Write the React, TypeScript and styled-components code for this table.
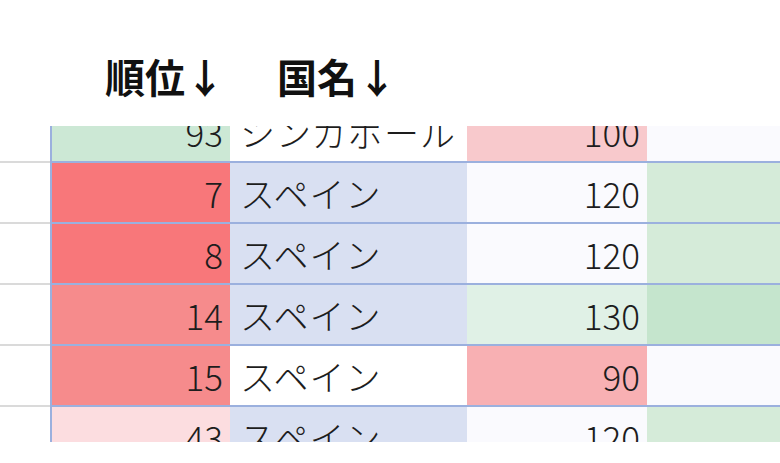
import React from 'react';
import styled, { createGlobalStyle } from 'styled-components';

const GlobalStyle = createGlobalStyle`
  html, body {
    margin: 0;
    padding: 0;
    background: #ffffff;
  }
  body {
    font-family: "Noto Sans CJK JP", "Noto Sans", sans-serif;
    color: #1d1d1d;
  }
`;

interface Row {
  rank: string;
  name: string;
  value: string;
  rankBg: string;
  nameBg: string;
  valueBg: string;
  extraBg: string;
}

// 表示する行（上端の1行は半分だけ見える）
const rows: Row[] = [
  { rank: '93', name: 'シンガポール', value: '100', rankBg: '#cce8d5', nameBg: '#ffffff', valueBg: '#f8c9cc', extraBg: '#fafafe' },
  { rank: '7', name: 'スペイン', value: '120', rankBg: '#f8777a', nameBg: '#d9e0f2', valueBg: '#fafafe', extraBg: '#d5ebd9' },
  { rank: '8', name: 'スペイン', value: '120', rankBg: '#f8777a', nameBg: '#d9e0f2', valueBg: '#fafafe', extraBg: '#d5ebd9' },
  { rank: '14', name: 'スペイン', value: '130', rankBg: '#f68b8c', nameBg: '#d9e0f2', valueBg: '#e0f1e6', extraBg: '#c5e5cd' },
  { rank: '15', name: 'スペイン', value: '90', rankBg: '#f68b8c', nameBg: '#ffffff', valueBg: '#f8b0b3', extraBg: '#fafafe' },
  { rank: '43', name: 'スペイン', value: '120', rankBg: '#fcdde0', nameBg: '#d9e0f2', valueBg: '#fafafe', extraBg: '#d5ebd9' },
];

const App: React.FC = () => {
  return (
    <>
      <GlobalStyle />
      <Page>
        <Header>
          <HeaderLabel>順位↓</HeaderLabel>
          <HeaderLabel>国名↓</HeaderLabel>
        </Header>
        <SheetViewport>
          <Sheet>
            {rows.map((row, i) => (
              <SheetRow key={i}>
                <StubCell />
                <Cell $bg={row.rankBg} $align="right" $first>
                  {row.rank}
                </Cell>
                <Cell $bg={row.nameBg} $align="left">
                  {row.name}
                </Cell>
                <Cell $bg={row.valueBg} $align="right">
                  {row.value}
                </Cell>
                <Cell $bg={row.extraBg} $align="right" />
              </SheetRow>
            ))}
          </Sheet>
        </SheetViewport>
      </Page>
    </>
  );
};

const Page = styled.div`
  width: 780px;
  height: 463px;
  overflow: hidden;
  background: #ffffff;
`;

const Header = styled.div`
  height: 126px;
  box-sizing: border-box;
  padding: 53px 0 0 105px;
  display: flex;
  gap: 52px;
`;

const HeaderLabel = styled.span`
  font-family: "Noto Sans CJK JP", "Noto Sans", sans-serif;
  font-weight: 700;
  font-size: 40px;
  line-height: 46px;
  color: #111111;
`;

const SheetViewport = styled.div`
  height: 316px;
  overflow: hidden;
`;

const Sheet = styled.div`
  margin-top: -24px;
  display: flex;
  flex-direction: column;
`;

const SheetRow = styled.div`
  display: grid;
  grid-template-columns: 50px 180px 237px 180px 1fr;
  height: 61px;
`;

const StubCell = styled.div`
  background: #ffffff;
  border-bottom: 2px solid #dadada;
`;

const Cell = styled.div<{ $bg: string; $align: 'left' | 'right'; $first?: boolean }>`
  box-sizing: border-box;
  background: ${p => p.$bg};
  border-bottom: 2px solid #9bb0de;
  border-left: ${p => (p.$first ? '2px solid #9bb0de' : 'none')};
  display: flex;
  align-items: center;
  justify-content: ${p => (p.$align === 'right' ? 'flex-end' : 'flex-start')};
  padding: ${p => (p.$align === 'right' ? '0 7px 0 0' : '0 0 0 10px')};
  font-family: "Noto Sans CJK JP", "Noto Sans", sans-serif;
  font-size: 35px;
  font-weight: 300;
  letter-spacing: ${p => (p.$align === 'left' ? '1px' : '0')};
  color: #1d1d1d;
  white-space: nowrap;
  overflow: hidden;
`;

export default App;
